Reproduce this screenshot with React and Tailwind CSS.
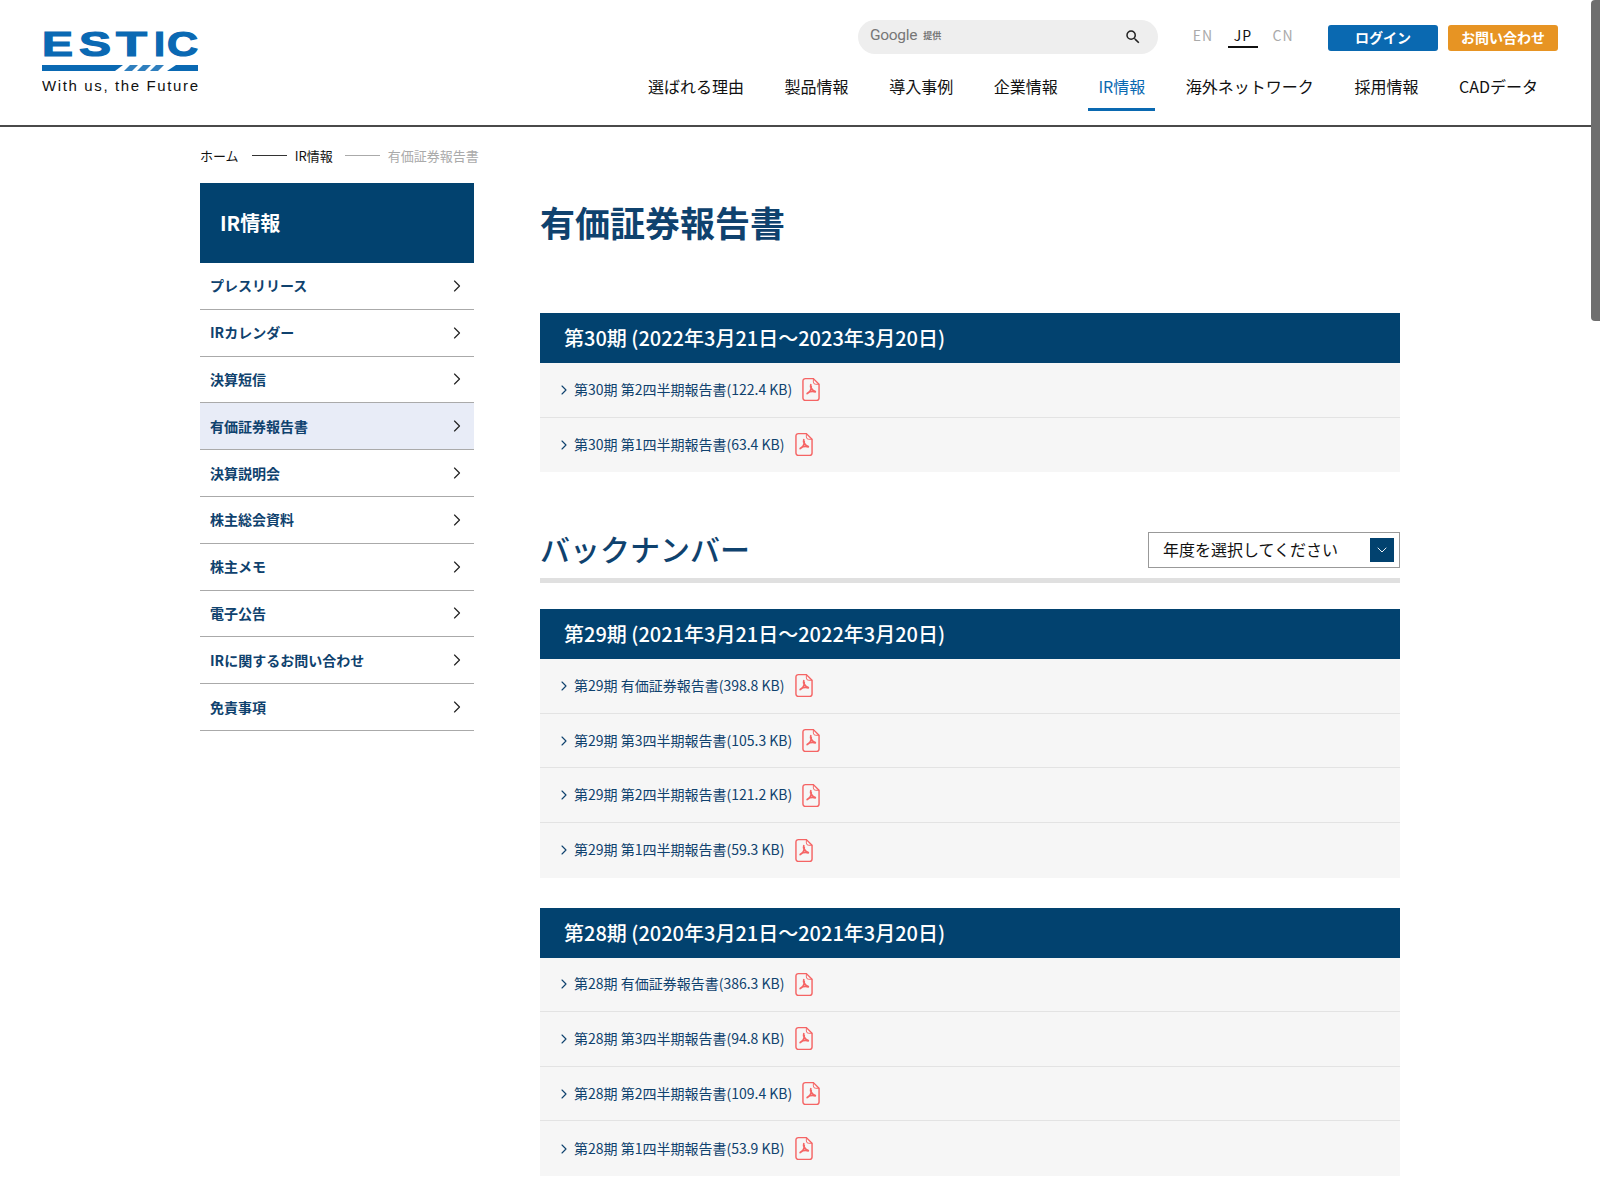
import { ChevronRight, ChevronDown } from "lucide-react"

const NAV = ["選ばれる理由", "製品情報", "導入事例", "企業情報", "IR情報", "海外ネットワーク", "採用情報", "CADデータ"]
const SIDE = ["プレスリリース", "IRカレンダー", "決算短信", "有価証券報告書", "決算説明会", "株主総会資料", "株主メモ", "電子公告", "IRに関するお問い合わせ", "免責事項"]

const LATEST = {
  title: "第30期 (2022年3月21日～2023年3月20日)",
  rows: ["第30期 第2四半期報告書(122.4 KB)", "第30期 第1四半期報告書(63.4 KB)"],
}
const BACK = [
  {
    title: "第29期 (2021年3月21日～2022年3月20日)",
    rows: ["第29期 有価証券報告書(398.8 KB)", "第29期 第3四半期報告書(105.3 KB)", "第29期 第2四半期報告書(121.2 KB)", "第29期 第1四半期報告書(59.3 KB)"],
  },
  {
    title: "第28期 (2020年3月21日～2021年3月20日)",
    rows: ["第28期 有価証券報告書(386.3 KB)", "第28期 第3四半期報告書(94.8 KB)", "第28期 第2四半期報告書(109.4 KB)", "第28期 第1四半期報告書(53.9 KB)"],
  },
]

// logo letters are spaced one by one, the mark is much wider than any font
const LOGO_LETTERS = [["E", 0, 31], ["S", 37, 32], ["T", 74, 31], ["I", 112, 11], ["C", 125, 31]]

function Logo() {
  return (
    <svg width="158" height="72" viewBox="0 0 158 72" className="block">
      {LOGO_LETTERS.map(([c, x, w]) => (
        <text key={c} x={x} y="31" textLength={w} lengthAdjust="spacingAndGlyphs" fontFamily="'Liberation Sans', sans-serif" fontWeight="700" fontSize="35" fill="#0a69b3" stroke="#0a69b3" strokeWidth="1.2">{c}</text>
      ))}
      <polygon points="0,40 81,40 73,46 0,46" fill="#0a69b3" />
      <polygon points="82,46 88,40 96,40 90,46" fill="#0a69b3" opacity="0.85" />
      <polygon points="95,46 101,40 109,40 103,46" fill="#0a69b3" opacity="0.85" />
      <polygon points="108,46 114,40 122,40 116,46" fill="#0a69b3" opacity="0.85" />
      <polygon points="125,46 134,40 156,40 156,46" fill="#0a69b3" />
      <text x="0" y="66" textLength="156" fontFamily="'Liberation Sans', sans-serif" fontSize="15" fill="#111">With us, the Future</text>
    </svg>
  )
}

function PdfIcon() {
  return (
    <svg width="18" height="25" viewBox="0 0 19 25" fill="none" stroke="#f56464" className="shrink-0">
      <path d="M3.500 1h8.500l6 6v14.500a2.500 2.500 0 0 1-2.500 2.500h-12a2.500 2.500 0 0 1-2.500-2.500v-18a2.500 2.500 0 0 1 2.500-2.500z" strokeWidth="1.500" />
      <path d="M12 1v3.500a2.500 2.500 0 0 0 2.500 2.500h3.500" strokeWidth="1" />
      <path d="M9.300 7.500c-.8 2.200 1 5.500 4.700 7.300M9.700 9.500c.3 3-1.500 5.800-4.200 7.300M5.800 16.300c2.300-1.700 5.700-2 8.200-1.400" strokeWidth="1.900" strokeLinecap="round" />
    </svg>
  )
}

function Section({ data }) {
  return (
    <section>
      <h3 className="h-[50px] bg-[#02426f] pl-6 text-[20px] font-medium leading-[50px] text-white">{data.title}</h3>
      {data.rows.map((r, i) => (
        <div key={r} className={`flex h-[54.6px] items-center bg-[#f6f6f6] pl-[16px] text-[14px] text-[#0f426e] ${i < data.rows.length - 1 ? "border-b border-[#e3e3e3]" : ""}`}>
          <ChevronRight size={16} strokeWidth={1.7} className="shrink-0" />
          <span className="ml-[2px] mr-[10px] -mt-[1px]">{r}</span>
          <PdfIcon />
        </div>
      ))}
    </section>
  )
}

export default function App() {
  return (
    <div className="relative h-[1200px] overflow-hidden bg-white font-['Noto_Sans_CJK_JP','Noto_Sans',sans-serif] text-[#111]">
      <header className="flex h-[127px] justify-between border-b-2 border-[#4a4a4a] pl-[42px] pr-[42px]">
        <div className="pt-[25px]"><Logo /></div>
        <div className="flex flex-col items-end">
          <div className="mt-[20px] flex items-start">
            <div className="flex h-[34px] w-[300px] items-center justify-between rounded-[17px] bg-[#eeeeee] pl-3 pr-[16px]">
              <span className="-mt-[2px] flex items-center gap-[6px] text-[#777]">
                <span className="font-['Roboto'] text-[15.5px] tracking-[-0.3px]">Google</span>
                <span className="text-[9px] font-bold">提供</span>
              </span>
              <svg width="18" height="18" viewBox="0 0 24 24" fill="#222">
                <path d="M15.500 14h-.79l-.28-.27A6.471 6.471 0 0 0 16 9.500 6.500 6.500 0 1 0 9.500 16c1.610 0 3.090-.59 4.230-1.570l.27.28v.79l5 4.990L20.490 19l-4.990-5zm-6 0C7.010 14 5 11.990 5 9.500S7.010 5 9.500 5 14 7.010 14 9.500 11.990 14 9.500 14z" />
              </svg>
            </div>
            <div className="ml-[30px] flex text-[14px] leading-[30px] tracking-[1px]">
              <span className="flex h-[28px] w-[30px] justify-center text-[#aaa]">EN</span>
              <span className="ml-[10px] flex h-[28px] w-[30px] justify-center border-b-2 border-[#111] text-[#111]">JP</span>
              <span className="ml-[10px] flex h-[28px] w-[30px] justify-center text-[#aaa]">CN</span>
            </div>
            <a className="ml-[30px] mt-[5px] flex h-[26px] w-[110px] items-center justify-center rounded-[3px] bg-[#0a69b1] pb-[2px] text-[14px] font-bold text-white">ログイン</a>
            <a className="ml-[10px] mt-[5px] flex h-[26px] w-[110px] items-center justify-center rounded-[3px] bg-[#e79423] pb-[2px] text-[14px] font-bold text-white">お問い合わせ</a>
          </div>
          <nav className="mt-[16px] mr-[10px] flex gap-[20.6px] text-[16px]">
            {NAV.map((n) => (
              <a key={n} className={`h-[41px] whitespace-nowrap border-b-[3px] px-[10px] leading-[32px] ${n === "IR情報" ? "border-[#0a69b1] text-[#0a69b1]" : "border-transparent"}`}>{n}</a>
            ))}
          </nav>
        </div>
      </header>

      <div className="pl-[200px]">
        <div className="flex h-[56px] items-center pt-[1px] text-[13px]">
          <span>ホーム</span>
          <span className="mx-[13px] h-px w-[35px] bg-[#333]" />
          <span className="-ml-[5px]">IR情報</span>
          <span className="mx-[12px] h-px w-[35px] bg-[#aaa]" />
          <span className="-ml-[4px] text-[#aaa]">有価証券報告書</span>
        </div>

        <div className="flex">
          <aside className="w-[274px] shrink-0">
            <div className="flex h-[80px] items-center bg-[#02426f] pl-[20px] text-[20px] font-bold text-white">IR情報</div>
            {SIDE.map((s) => (
              <a key={s} className={`flex h-[46.8px] items-center justify-between border-b border-[#aaaaaa] pl-[10px] pr-[7px] text-[14px] font-bold text-[#0f426e] ${s === "有価証券報告書" ? "bg-[#e8ecf7]" : ""}`}>
                {s}
                <ChevronRight size={20} strokeWidth={1.4} className="text-[#222]" />
              </a>
            ))}
          </aside>

          <main className="ml-[66px] w-[860px]">
            <h1 className="h-[130px] pt-[13px] text-[35px] font-bold leading-[52px] text-[#0f426e]">有価証券報告書</h1>
            <Section data={LATEST} />

            <div className="mt-[60px] flex h-[51px] items-start justify-between border-b-[5px] border-[#e0e0e0]">
              <h2 className="-mt-[6px] text-[30px] font-medium leading-[44px] text-[#0f426e]">バックナンバー</h2>
              <div className="flex h-[36px] w-[252px] items-center justify-between border border-[#999] pl-[14px] pr-[5px] text-[16px]">
                <span className="-mt-[3px]">年度を選択してください</span>
                <span className="flex h-[24px] w-[24px] items-center justify-center bg-[#02426f] text-white">
                  <ChevronDown size={16} strokeWidth={1.4} />
                </span>
              </div>
            </div>

            <div className="mt-[26px] flex flex-col gap-[30px]">
              {BACK.map((d) => <Section key={d.title} data={d} />)}
            </div>
          </main>
        </div>
      </div>

      {/* scrollbar overlay */}
      <div className="absolute right-0 top-0 h-[321px] w-[9px] rounded-l-[4px] bg-[#6e6e6e]" />
    </div>
  )
}
